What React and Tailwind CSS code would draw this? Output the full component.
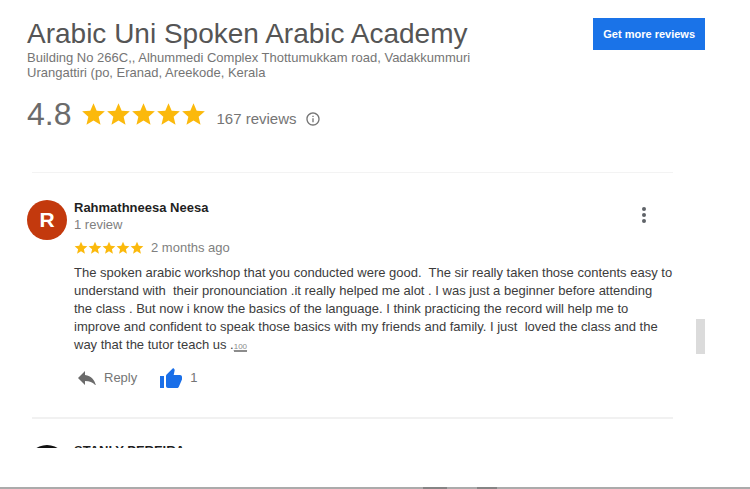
import React from "react";

const STAR_PATH =
  "M12 17.27L18.18 21l-1.64-7.03L22 9.24l-7.19-.61L12 2 9.19 8.63 2 9.24l5.46 4.73L5.82 21z";

const reviews = [
  {
    name: "Rahmathneesa Neesa",
    initial: "R",
    avatar: "bg-[#c3390d]",
    count: "1 review",
    rating: 5,
    time: "2 months ago",
    likes: 1,
    lines: [
      "The spoken arabic workshop that you conducted were good.  The sir really taken those contents easy to",
      "understand with  their pronounciation .it really helped me alot . I was just a beginner before attending",
      "the class . But now i know the basics of the language. I think practicing the record will help me to",
      "improve and confident to speak those basics with my friends and family. I just  loved the class and the",
      "way that the tutor teach us .",
    ],
  },
];

function Stars({ count, className }) {
  return (
    <div className="flex" role="img" aria-label={`${count} out of 5 stars`}>
      {Array.from({ length: count }).map((_, index) => (
        <svg key={index} viewBox="1 1 22 22" className={className} fill="#fbb90c">
          <path d={STAR_PATH} />
        </svg>
      ))}
    </div>
  );
}

function Review({ review }) {
  return (
    <article className="flex gap-[7px] pt-[27px] pb-[27px]">
      <div
        className={`flex h-10 w-10 shrink-0 items-center justify-center rounded-full text-[21px] font-bold text-white ${review.avatar}`}
      >
        {review.initial}
      </div>

      <div className="min-w-0 flex-1">
        <div className="flex justify-between">
          <div>
            <h2 className="text-[13px] leading-4 font-bold text-[#1f1f1f]">{review.name}</h2>
            <p className="text-[13px] leading-[18px] text-[#808080]">{review.count}</p>
          </div>
          <button aria-label="More options" className="mr-[19px] h-[30px] w-5">
            <svg viewBox="0 0 20 30" className="h-[30px] w-5" fill="#5f6368">
              <circle cx="10" cy="9" r="2" />
              <circle cx="10" cy="15" r="2" />
              <circle cx="10" cy="21" r="2" />
            </svg>
          </button>
        </div>

        <div className="mt-[5px] flex items-center gap-[7px]">
          <Stars count={review.rating} className="h-3.5 w-3.5" />
          <span className="text-[13px] leading-[18px] text-[#808080]">{review.time}</span>
        </div>

        <p className="mt-[7px] text-[13px] leading-[18px] whitespace-pre text-[#3c3c3c]">
          {review.lines.join("\n")}
          <span className="inline-block border-b border-[#8c8c8c] align-baseline text-[8px] leading-none text-[#8c8c8c] underline">
            100
          </span>
        </p>

        <div className="mt-3 flex items-center text-[13px] leading-6 text-[#757575]">
          <button className="ml-1 flex items-center gap-2">
            <svg viewBox="3 5 18 14" className="h-[14px] w-[18px]" fill="#6b6b6b">
              <path d="M10 9V5l-7 7 7 7v-4.1c5 0 8.5 1.6 11 5.1-1-5-4-10-11-11z" />
            </svg>
            Reply
          </button>
          <button className="ml-[23px] flex items-center gap-2" aria-label="Like">
            <svg viewBox="1 1 22 20" className="h-5 w-[22px]" fill="#1a6fe8">
              <path d="M1 21h4V9H1v12zm22-11c0-1.1-.9-2-2-2h-6.31l.95-4.57.03-.32c0-.41-.17-.79-.44-1.06L14.17 1 7.59 7.59C7.22 7.95 7 8.45 7 9v10c0 1.1.9 2 2 2h9c.83 0 1.54-.5 1.84-1.22l3.02-7.05c.09-.23.14-.47.14-.73v-2z" />
            </svg>
            <span>{review.likes}</span>
          </button>
        </div>
      </div>
    </article>
  );
}

export default function App() {
  return (
    <div
      className="flex min-h-screen flex-col overflow-hidden bg-white"
      style={{ fontFamily: '"Liberation Sans", Arial, sans-serif' }}
    >
      <main className="pt-[18px] pr-[45px] pl-[27px]">
        {/* Header */}
        <header className="flex items-start justify-between">
          <div>
            <h1 className="text-[28px] leading-8 whitespace-nowrap text-[#555555]">
              Arabic Uni Spoken Arabic Academy
            </h1>
            <p className="text-[13px] leading-[15px] whitespace-nowrap text-[#757575]">
              Building No 266C,, Alhummedi Complex Thottumukkam road, Vadakkummuri
              <br />
              Urangattiri (po, Eranad, Areekode, Kerala
            </p>
          </div>
          <button className="h-8 shrink-0 bg-[#1a73e8] px-2.5 text-[11px] font-bold text-white">
            Get more reviews
          </button>
        </header>

        {/* Rating summary */}
        <div className="mt-4 flex items-center">
          <span className="text-[32px] leading-9 text-[#6b6b6b]">4.8</span>
          <div className="ml-2.5">
            <Stars count={5} className="h-[25px] w-[25px]" />
          </div>
          <span className="mt-2.5 ml-[10px] text-[15px] leading-5 text-[#757575]">167 reviews</span>
          <svg viewBox="0 0 24 24" className="mt-2.5 ml-2 h-4 w-4" fill="#757575">
            <path d="M11 7h2v2h-2zm0 4h2v6h-2zm1-9C6.480 2 2 6.480 2 12s4.480 10 10 10 10-4.480 10-10S17.520 2 12 2zm0 18c-4.410 0-8-3.590-8-8s3.590-8 8-8 8 3.590 8 8-3.590 8-8 8z" />
          </svg>
        </div>

        {/* Review list */}
        <section className="relative mt-10 h-[276px] overflow-hidden">
          <div className="mr-8">
            <hr className="ml-[5px] border-t border-[#f3f3f3]" />
            {reviews.map((review) => (
              <React.Fragment key={review.name}>
                <Review review={review} />
                <hr className="ml-[5px] border-t-2 border-[#f1f1f1]" />
              </React.Fragment>
            ))}
            <article className="flex gap-[7px] pt-[26px]">
              <div className="h-10 w-10 shrink-0 rounded-full bg-[#111111]" />
              <h2 className="text-[13px] leading-3 font-bold text-[#1f1f1f]">STANLY PEREIRA</h2>
            </article>
          </div>
          <div className="absolute top-[147px] right-0 h-[35px] w-[9px] bg-[#dbdbdb]" />
        </section>
      </main>

      {/* Bottom edge of the window */}
      <footer className="mt-auto flex h-0.5 justify-center gap-[30px] bg-[#ababab] pl-[170px]">
        <div className="w-6 bg-[#858585]" />
        <div className="w-5 bg-[#858585]" />
      </footer>
    </div>
  );
}
